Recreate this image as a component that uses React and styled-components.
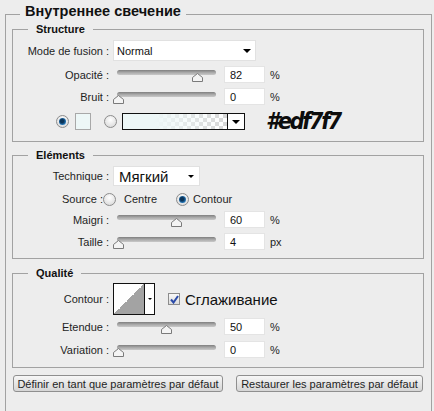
import styled, { createGlobalStyle } from "styled-components";

const GlobalStyle = createGlobalStyle`
  html, body {
    margin: 0;
    padding: 0;
    background: #ededed;
  }
  body {
    font-family: "Liberation Sans", Arial, sans-serif;
    font-size: 11px;
    color: #1e1e1e;
    height: 411px;
    overflow: hidden;
  }
`;

const SLIDERS = {
  opacity: 0.82,
  noise: 0,
  choke: 0.6,
  size: 0,
  range: 0.5,
  jitter: 0,
};

function Slider({ value }) {
  return (
    <SliderBox>
      <Track />
      <Thumb style={{ left: `${1 + value * 97.5 - 5.5}px` }}>
        <svg width="11" height="9" viewBox="0 0 11 9">
          <path
            d="M5.5 0.5 L10.5 4.5 L10.5 8.5 L0.5 8.5 L0.5 4.5 Z"
            fill="#f4f4f4"
            stroke="#7a7a7a"
          />
        </svg>
      </Thumb>
    </SliderBox>
  );
}

function SliderRow({ label, value, number, unit, mt }) {
  return (
    <Row $mt={mt}>
      <Label>{label}</Label>
      <Slider value={value} />
      <NumberField>{number}</NumberField>
      <Unit>{unit}</Unit>
    </Row>
  );
}

export default function App() {
  return (
    <Page>
      <GlobalStyle />
      <Dialog>
        <Title>Внутреннее свечение</Title>

        <Group $top={7} $bottom={11}>
          <GroupTitle>Structure</GroupTitle>
          <Row>
            <Label>Mode de fusion :</Label>
            <Select $width={143} $height={21}>
              <span>Normal</span>
              <Caret $size={4} />
            </Select>
          </Row>
          <SliderRow label="Opacité :" value={SLIDERS.opacity} number="82" unit="%" />
          <SliderRow label="Bruit :" value={SLIDERS.noise} number="0" unit="%" />
          <ColorRow>
            <Radio $checked />
            <Swatch />
            <Radio $ml={13} />
            <GradientPicker>
              <GradientPreview />
              <PickerArrow>
                <Caret $size={4.5} />
              </PickerArrow>
            </GradientPicker>
            <HexNote>#edf7f7</HexNote>
          </ColorRow>
        </Group>

        <Group $mt={9} $top={7} $bottom={8}>
          <GroupTitle>Eléments</GroupTitle>
          <Row>
            <Label>Technique :</Label>
            <Select $width={87} $height={20} $big>
              <span>Мягкий</span>
              <Caret $size={3} />
            </Select>
          </Row>
          <SourceRow>
            <Label $width={90} $gap={0}>
              Source :
            </Label>
            <Radio />
            <OptionText>Centre</OptionText>
            <Radio $checked $ml={19} />
            <OptionText $ml={4}>Contour</OptionText>
          </SourceRow>
          <SliderRow label="Maigri :" value={SLIDERS.choke} number="60" unit="%" />
          <SliderRow label="Taille :" value={SLIDERS.size} number="4" unit="px" />
        </Group>

        <Group $mt={10} $top={6} $bottom={9}>
          <GroupTitle>Qualité</GroupTitle>
          <Row>
            <Label>Contour :</Label>
            <ContourPicker>
              <ContourPreview />
              <ContourArrow>
                <Caret $size={2.5} />
              </ContourArrow>
            </ContourPicker>
            <Check>
              <svg width="9" height="9" viewBox="0 0 9 9">
                <path
                  d="M1 4.5 L3.5 7.5 L8 1"
                  fill="none"
                  stroke="#2a4aa8"
                  strokeWidth="2"
                />
              </svg>
            </Check>
            <CheckLabel>Сглаживание</CheckLabel>
          </Row>
          <SliderRow label="Etendue :" value={SLIDERS.range} number="50" unit="%" mt={3} />
          <SliderRow label="Variation :" value={SLIDERS.jitter} number="0" unit="%" mt={6} />
        </Group>

        <ButtonBar>
          <Button $width={210}>Définir en tant que paramètres par défaut</Button>
          <Button $width={187}>Restaurer les paramètres par défaut</Button>
        </ButtonBar>
      </Dialog>
    </Page>
  );
}

const Page = styled.div`
  height: 411px;
  padding-top: 3px;
  box-sizing: border-box;
  overflow: hidden;
`;

const Dialog = styled.fieldset`
  box-sizing: border-box;
  width: 427px;
  min-inline-size: 0;
  margin: 0 0 0 5px;
  padding: 0 7px 30px 6px;
  border: 1px solid #a2a2a2;
`;

const Title = styled.legend`
  margin-left: 8px;
  padding: 0 5px 6px;
  font-size: 14.5px;
  line-height: 16px;
  font-weight: 700;
  color: #111;
`;

const Group = styled.fieldset`
  min-inline-size: 0;
  margin: ${(p) => p.$mt || 0}px 0 0;
  padding: ${(p) => p.$top}px 0 ${(p) => p.$bottom}px;
  border: 1px solid #a2a2a2;
  display: block;
`;

const GroupTitle = styled.legend`
  margin-left: 15px;
  padding: 0 8px;
  font-size: 11px;
  line-height: 8px;
  font-weight: 700;
  color: #111;
`;

const Row = styled.div`
  display: flex;
  align-items: center;
  margin-top: ${(p) => (p.$mt === undefined ? 5 : p.$mt)}px;
  &:first-of-type {
    margin-top: 0;
  }
`;

const Label = styled.span`
  flex-shrink: 0;
  width: ${(p) => p.$width || 96}px;
  margin-right: ${(p) => (p.$gap === undefined ? 4 : p.$gap)}px;
  text-align: right;
  white-space: nowrap;
`;

const Select = styled.div`
  box-sizing: border-box;
  width: ${(p) => p.$width}px;
  height: ${(p) => p.$height}px;
  display: flex;
  align-items: center;
  justify-content: space-between;
  padding: 0 ${(p) => (p.$big ? 5 : 4)}px 0 ${(p) => (p.$big ? 5 : 3)}px;
  background: #fff;
  border: 1px solid #e1e1e1;
  font-size: ${(p) => (p.$big ? 15 : 11)}px;
  color: #111;
`;

const Caret = styled.span`
  width: 0;
  height: 0;
  border-left: ${(p) => p.$size}px solid transparent;
  border-right: ${(p) => p.$size}px solid transparent;
  border-top: ${(p) => p.$size}px solid #000;
`;

const SliderBox = styled.div`
  position: relative;
  flex-shrink: 0;
  width: 99px;
  height: 17px;
  margin: 0 4px;
`;

const Track = styled.div`
  margin-top: 4px;
  height: 5px;
  border-radius: 3px;
  background: linear-gradient(#7f7f7f, #a9a9a9 50%, #c9c9c9);
`;

const Thumb = styled.div`
  position: absolute;
  top: 7px;
  width: 11px;
  height: 9px;
  line-height: 0;
`;

const NumberField = styled.div`
  box-sizing: border-box;
  width: 41px;
  height: 17px;
  margin-left: 4px;
  padding-left: 5px;
  display: flex;
  align-items: center;
  background: #fff;
  border: 1px solid #e4e4e4;
  color: #111;
`;

const Unit = styled.span`
  margin-left: 5px;
`;

const ColorRow = styled.div`
  display: flex;
  align-items: center;
  height: 17px;
  margin-top: 8px;
  padding-left: 43px;
`;

const Radio = styled.span`
  position: relative;
  flex-shrink: 0;
  box-sizing: border-box;
  width: 13px;
  height: 13px;
  margin-left: ${(p) => p.$ml || 0}px;
  border-radius: 50%;
  border: 1px solid #8c8c8c;
  background: radial-gradient(circle at 50% 35%, #ffffff, #d4d4d4);

  &::after {
    content: "";
    display: ${(p) => (p.$checked ? "block" : "none")};
    position: absolute;
    left: 2px;
    top: 2px;
    width: 7px;
    height: 7px;
    border-radius: 50%;
    background: radial-gradient(circle at 45% 45%, #0b3458 0 30%, #2273b4 65%, #62b0e2 100%);
  }
`;

const Swatch = styled.span`
  box-sizing: border-box;
  width: 16px;
  height: 17px;
  margin-left: 6px;
  background: #edf7f7;
  border: 1px solid #a8a8a8;
`;

const GradientPicker = styled.div`
  box-sizing: border-box;
  display: flex;
  width: 123px;
  height: 17px;
  margin-left: 5px;
  border: 1px solid #111;
`;

const GradientPreview = styled.div`
  flex: 1;
  background:
    linear-gradient(to right, #edf7f7 0%, #edf7f7 30%, rgba(237, 247, 247, 0) 100%),
    repeating-conic-gradient(#d6d6d6 0 25%, #ffffff 0 50%) 0 0 / 8px 8px;
`;

const PickerArrow = styled.div`
  width: 16px;
  display: flex;
  align-items: center;
  justify-content: center;
  background: #fff;
  border-left: 1px solid #111;
`;

const HexNote = styled.span`
  margin-left: 21px;
  font-family: "DejaVu Sans Condensed", "DejaVu Sans", sans-serif;
  font-size: 23px;
  font-weight: 700;
  font-style: italic;
  letter-spacing: -2.3px;
  line-height: 17px;
  color: #0d0d0d;
`;

const SourceRow = styled.div`
  display: flex;
  align-items: center;
  height: 14px;
  margin-top: 6px;
`;

const OptionText = styled.span`
  margin-left: ${(p) => p.$ml || 8}px;
`;

const ContourPicker = styled.div`
  box-sizing: border-box;
  display: flex;
  width: 42px;
  height: 32px;
  border: 1px solid #111;
  background: #fff;
`;

const ContourPreview = styled.div`
  width: 30px;
  background: linear-gradient(to bottom right, #ffffff 50%, #a3a3a3 50%);
  border-right: 1px solid #111;
`;

const ContourArrow = styled.div`
  flex: 1;
  display: flex;
  align-items: center;
  justify-content: center;
`;

const Check = styled.span`
  box-sizing: border-box;
  width: 12px;
  height: 12px;
  margin-left: 13px;
  display: flex;
  align-items: center;
  justify-content: center;
  border: 1px solid #8c8c8c;
  background: linear-gradient(#f8f8f8, #dcdcdc);
`;

const CheckLabel = styled.span`
  margin-left: 5px;
  font-size: 15px;
  color: #111;
`;

const ButtonBar = styled.div`
  display: flex;
  gap: 13px;
  margin: 7px 0 0 1px;
`;

const Button = styled.button`
  box-sizing: border-box;
  width: ${(p) => p.$width}px;
  height: 17px;
  padding: 0;
  font-family: "Liberation Sans", Arial, sans-serif;
  font-size: 11px;
  color: #1e1e1e;
  border: 1px solid #8f8f8f;
  border-radius: 3px;
  background: linear-gradient(#f7f7f7, #e6e6e6 50%, #d6d6d6);
`;
